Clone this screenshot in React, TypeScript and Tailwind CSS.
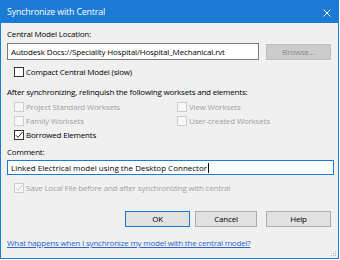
import React from 'react';

type BoxProps = { checked?: boolean; disabled?: boolean };

function CheckBox({ checked, disabled }: BoxProps) {
  return (
    <div
      className={`w-[10px] h-[10px] shrink-0 border flex items-center justify-center ${
        disabled ? 'border-[#cccccc] bg-[#f7f7f7]' : 'border-[#333333] bg-white'
      }`}
    >
      {checked && (
        <svg width="8" height="8" viewBox="0 0 8 8">
          <path
            d="M0.8 4.2 L3 6.4 L7.3 1.2"
            fill="none"
            stroke={disabled ? '#c4c4c4' : '#222222'}
            strokeWidth="1"
          />
        </svg>
      )}
    </div>
  );
}

function Option({ label, checked, disabled }: BoxProps & { label: string }) {
  return (
    <div className="flex items-center h-[14px]">
      <CheckBox checked={checked} disabled={disabled} />
      <span className={`ml-[2px] ${disabled ? 'text-[#a2a2a2]' : 'text-black'}`}>{label}</span>
    </div>
  );
}

export default function App() {
  return (
    <div className="w-[340px] h-[260px] bg-white">
      <div className="relative w-[339px] h-[259px] flex flex-col border border-[#1a7ad4] bg-[#f0f0f0] font-['Open_Sans',sans-serif] text-[8px] tracking-[-0.2px] text-black">
        {/* title bar */}
        <div className="h-[22px] shrink-0 bg-[#1a7ad4] flex items-center justify-between pl-[6px] pr-[6px] pt-[1px]">
          <span className="text-white text-[8.8px] tracking-[-0.15px]">Synchronize with Central</span>
          <svg width="8" height="8" viewBox="0 0 8 8" className="mr-[1px]">
            <path d="M0.5 0.5 L7.5 7.5 M7.5 0.5 L0.5 7.5" stroke="#ffffff" strokeWidth="1" />
          </svg>
        </div>

        <div className="flex flex-col px-[6px]">
          <div className="mt-[3px] h-[16px] leading-[16px]">Central Model Location:</div>

          <div className="mt-[1px] flex items-start">
            <div className="w-[252px] h-[17px] border border-[#7a7a7a] bg-white pl-[3px] flex items-center whitespace-nowrap overflow-hidden tracking-[-0.15px]">
              Autodesk Docs://Speciality Hospital/Hospital_Mechanical.rvt
            </div>
            <div className="ml-[7px] mt-[1px] w-[65px] h-[16px] border border-[#bfbfbf] bg-[#cccccc] text-[#8a8a8a] flex items-center justify-center">
              Browse...
            </div>
          </div>

          <div className="mt-[4px] h-[16px] flex items-center pl-[7px]">
            <CheckBox />
            <span className="ml-[2px]">Compact Central Model (slow)</span>
          </div>

          <div className="mt-[4px] h-[16px] leading-[16px]">
            After synchronizing, relinquish the following worksets and elements:
          </div>

          <div className="grid grid-cols-[163px_1fr] pl-[7px]">
            <Option label="Project Standard Worksets" disabled />
            <Option label="View Worksets" disabled />
            <Option label="Family Worksets" disabled />
            <Option label="User-created Worksets" disabled />
            <Option label="Borrowed Elements" checked />
          </div>

          <div className="mt-[2px] h-[15px] leading-[15px]">Comment:</div>

          <div className="mt-[1px] w-[327px] h-[15px] border border-[#1a7ad4] bg-white pl-[3px] flex items-center whitespace-nowrap tracking-normal">
            Linked Electrical model using the Desktop Connector
            <span className="ml-[1px] w-[1px] h-[10px] bg-black" />
          </div>

          <div className="mt-[6px] pl-[7px]">
            <Option label="Save Local File before and after synchronizing with central" checked disabled />
          </div>

          <div className="mt-[16px] flex pl-[118px]">
            <div className="w-[65px] h-[16px] border border-[#1a78d2] bg-[#e1e1e1] flex items-center justify-center">
              OK
            </div>
            <div className="ml-[5px] w-[62px] h-[16px] border border-[#adadad] bg-[#e1e1e1] flex items-center justify-center">
              Cancel
            </div>
            <div className="ml-[9px] w-[65px] h-[16px] border border-[#adadad] bg-[#e1e1e1] flex items-center justify-center">
              Help
            </div>
          </div>

          <div className="mt-[9px] h-[14px] leading-[14px] text-[#2a66c8] underline">
            What happens when I synchronize my model with the central model?
          </div>
        </div>

        {/* resize grip */}
        <svg width="6" height="6" viewBox="0 0 6 6" className="absolute right-[1px] bottom-[1px]">
          <rect x="4" y="0" width="1" height="1" fill="#b8b8b8" />
          <rect x="2" y="2" width="1" height="1" fill="#b8b8b8" />
          <rect x="4" y="2" width="1" height="1" fill="#b8b8b8" />
          <rect x="0" y="4" width="1" height="1" fill="#b8b8b8" />
          <rect x="2" y="4" width="1" height="1" fill="#b8b8b8" />
          <rect x="4" y="4" width="1" height="1" fill="#b8b8b8" />
        </svg>
      </div>
    </div>
  );
}
